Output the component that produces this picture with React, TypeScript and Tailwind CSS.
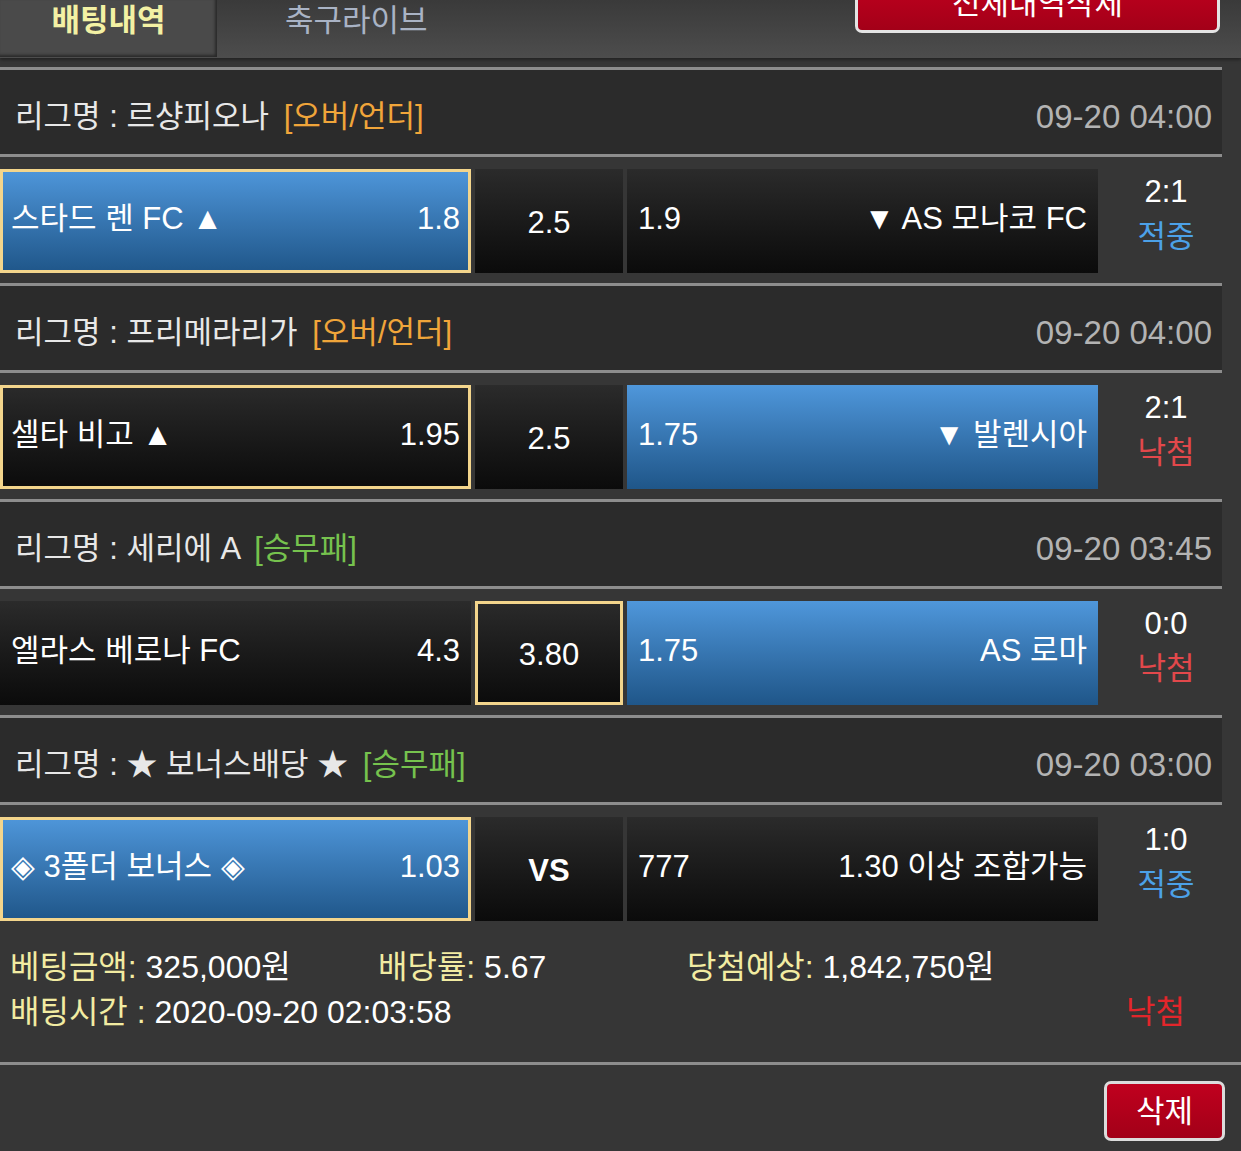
import type { ReactNode } from "react";

const FONT = "font-['Liberation_Sans','Noto_Sans_CJK_KR',sans-serif]";

type Side = { name: string; odds: string; blue?: boolean; picked?: boolean };

type Bet = {
  league: string;
  kind: string;
  kindColor: string;
  date: string;
  home: Side;
  mid: { label: string; picked?: boolean; bold?: boolean };
  away: Side;
  score: string;
  result: "적중" | "낙첨";
};

const bets: Bet[] = [
  {
    league: "르샹피오나",
    kind: "오버/언더",
    kindColor: "text-[#f0a53a]",
    date: "09-20 04:00",
    home: { name: "스타드 렌 FC ▲", odds: "1.8", blue: true, picked: true },
    mid: { label: "2.5" },
    away: { name: "▼ AS 모나코 FC", odds: "1.9" },
    score: "2:1",
    result: "적중",
  },
  {
    league: "프리메라리가",
    kind: "오버/언더",
    kindColor: "text-[#f0a53a]",
    date: "09-20 04:00",
    home: { name: "셀타 비고 ▲", odds: "1.95", picked: true },
    mid: { label: "2.5" },
    away: { name: "▼ 발렌시아", odds: "1.75", blue: true },
    score: "2:1",
    result: "낙첨",
  },
  {
    league: "세리에 A",
    kind: "승무패",
    kindColor: "text-[#76c24e]",
    date: "09-20 03:45",
    home: { name: "엘라스 베로나 FC", odds: "4.3" },
    mid: { label: "3.80", picked: true },
    away: { name: "AS 로마", odds: "1.75", blue: true },
    score: "0:0",
    result: "낙첨",
  },
  {
    league: "★ 보너스배당 ★",
    kind: "승무패",
    kindColor: "text-[#76c24e]",
    date: "09-20 03:00",
    home: { name: "◈ 3폴더 보너스 ◈", odds: "1.03", blue: true, picked: true },
    mid: { label: "VS", bold: true },
    away: { name: "1.30 이상 조합가능", odds: "777" },
    score: "1:0",
    result: "적중",
  },
];

function Cell({
  blue,
  picked,
  className,
  children,
}: {
  blue?: boolean;
  picked?: boolean;
  className: string;
  children: ReactNode;
}) {
  const bg = blue
    ? "bg-linear-to-b from-[#4f97db] to-[#1f5689]"
    : "bg-linear-to-b from-[#2b2b2b] to-[#0b0b0b]";
  const border = picked ? "border-[#f3d58c]" : "border-transparent";
  return (
    <div
      className={`flex h-[104px] items-center border-[3px] bg-origin-border px-[8px] text-[31px] leading-none text-white ${bg} ${border} ${className}`}
    >
      {children}
    </div>
  );
}

function BetBlock({ bet }: { bet: Bet }) {
  return (
    <div>
      {/* league header */}
      <div className="flex h-[90px] w-[1222px] items-center justify-between border-y-[3px] border-[#8d8d8d] bg-[#2b2b2b] pl-[15px] pr-[10px] pt-[8px]">
        <span className="text-[31px] leading-none text-[#e8e8e8]">
          리그명 : {bet.league}{" "}
          <span className={`ml-[6px] ${bet.kindColor}`}>[{bet.kind}]</span>
        </span>
        <span className="text-[33px] leading-none text-[#b3b3b3]">{bet.date}</span>
      </div>

      {/* match row */}
      <div className="flex pb-[10px] pt-[12px]">
        <Cell blue={bet.home.blue} picked={bet.home.picked} className="w-[471px] justify-between pb-[5px]">
          <span>{bet.home.name}</span>
          <span>{bet.home.odds}</span>
        </Cell>
        <Cell picked={bet.mid.picked} className="ml-[4px] w-[148px] justify-center pt-[2px]">
          <span className={bet.mid.bold ? "font-bold" : ""}>{bet.mid.label}</span>
        </Cell>
        <Cell blue={bet.away.blue} picked={bet.away.picked} className="ml-[4px] w-[471px] justify-between pb-[5px]">
          <span>{bet.away.odds}</span>
          <span>{bet.away.name}</span>
        </Cell>
        <div className="flex h-[104px] flex-1 flex-col items-center justify-center pb-[14px] pr-[7px] text-[31px] leading-[45px]">
          <span className="text-white">{bet.score}</span>
          <span className={bet.result === "적중" ? "text-[#4ca1e8]" : "text-[#e2484b]"}>
            {bet.result}
          </span>
        </div>
      </div>
    </div>
  );
}

export default function App() {
  return (
    <div className={`${FONT} min-h-[1151px] w-[1241px] overflow-hidden bg-[#363636] text-white`}>
      {/* Top tabs */}
      <div className="flex h-[58px] items-start bg-linear-to-b from-[#3a3a3a] to-[#4d4d4d] shadow-[0_2px_3px_rgba(0,0,0,0.35)]">
        <div className="flex h-[57px] w-[217px] justify-center bg-[#4a4a4a] pt-[5px] text-[31px] font-bold leading-[32px] text-[#f3f1a4] shadow-[inset_-2px_-2px_3px_rgba(0,0,0,0.45)]">
          배팅내역
        </div>
        <div className="ml-[68px] pt-[5px] text-[31px] leading-[32px] text-[#a9b3c5]">축구라이브</div>
        <button className="-mt-[26px] ml-auto mr-[21px] h-[59px] w-[365px] rounded-[7px] border-[3px] border-[#e4e4e4] bg-linear-to-b from-[#c3001f] to-[#a30018] text-[31px] leading-none text-white">
          전체내역삭제
        </button>
      </div>

      <div className="mt-[9px]">
        {bets.map((bet, i) => (
          <BetBlock key={i} bet={bet} />
        ))}
      </div>

      {/* Summary */}
      <div className="pb-[28px] pl-[10px] pt-[13px] text-[32px] leading-none">
        <div className="flex h-[45px] items-center">
          <span className="w-[368px]">
            <span className="text-[#f2eca2]">베팅금액:</span> 325,000원
          </span>
          <span className="w-[309px]">
            <span className="text-[#f2eca2]">배당률:</span> 5.67
          </span>
          <span>
            <span className="text-[#f2eca2]">당첨예상:</span> 1,842,750원
          </span>
        </div>
        <div className="flex h-[45px] items-center justify-between pr-[56px]">
          <span>
            <span className="text-[#f2eca2]">배팅시간 :</span> 2020-09-20 02:03:58
          </span>
          <span className="text-[#e2262b]">낙첨</span>
        </div>
      </div>

      <div className="flex justify-end border-t-[3px] border-[#8d8d8d] pr-[16px] pt-[16px]">
        <button className="h-[60px] w-[121px] rounded-[7px] border-[3px] border-[#dcdcdc] bg-linear-to-b from-[#c0001e] to-[#a20018] text-[31px] leading-none text-white">
          삭제
        </button>
      </div>
    </div>
  );
}
